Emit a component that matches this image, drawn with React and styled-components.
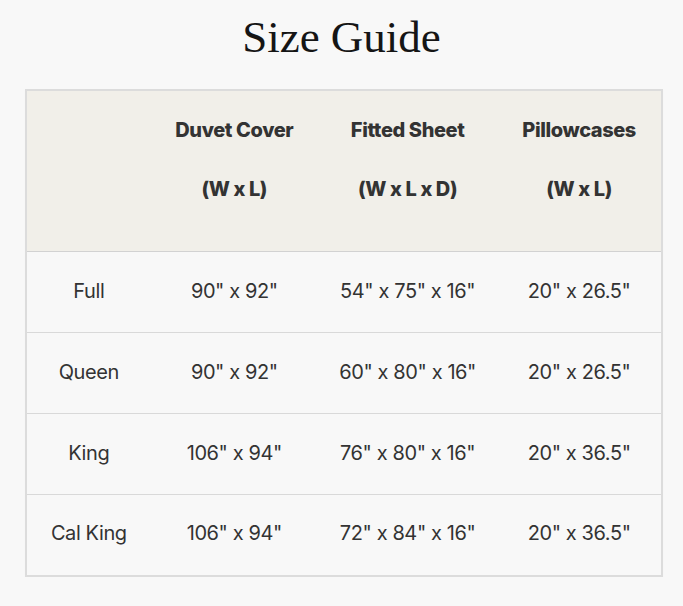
import React from "react";
import styled, { createGlobalStyle } from "styled-components";

const GlobalStyle = createGlobalStyle`
  body {
    margin: 0;
    background: #f8f8f8;
    font-family: "Inter", "Liberation Sans", sans-serif;
    color: #333;
  }
`;

const Page = styled.div`
  width: 683px;
  padding: 12px 0 0;
  box-sizing: border-box;
`;

const Title = styled.h1`
  margin: 0 0 27px;
  text-align: center;
  font-family: "Liberation Serif", "DejaVu Serif", serif;
  font-weight: 400;
  font-size: 45px;
  line-height: 50px;
  color: #151515;
`;

const Table = styled.table`
  margin: 0 0 0 25px;
  width: 638px;
  border-collapse: collapse;
  border: 2px solid #dcdcdc;
  box-shadow: 0 1px 1px rgba(0, 0, 0, 0.04);

  & th,
  & td {
    text-align: center;
    padding: 0;
  }
`;

const Head = styled.thead`
  background: #f1efe9;
  border-bottom: 1px solid #d2d2d2;
`;

const HeadCell = styled.th`
  height: 138px;
  padding-bottom: 22px !important;
  vertical-align: middle;
  font-size: 20px;
  font-weight: 800;
  color: #333;
  line-height: 59px;
  letter-spacing: -0.4px;
  width: ${(p) => p.$w}px;
`;

const Row = styled.tr`
  height: 81px;
  border-bottom: 1px solid #d9d9d9;

  &:last-child {
    border-bottom: none;
  }
`;

const Cell = styled.td`
  padding-bottom: 3px !important;
  font-size: 20px;
  font-weight: 400;
  color: #333;
  letter-spacing: -0.4px;
`;

const columns = [
  { w: 124, lines: [] },
  { w: 168, lines: ["Duvet Cover", "(W x L)"] },
  { w: 180, lines: ["Fitted Sheet", "(W x L x D)"] },
  { w: 164, lines: ["Pillowcases", "(W x L)"] },
];

const rows = [
  ["Full", '90" x 92"', '54" x 75" x 16"', '20" x 26.5"'],
  ["Queen", '90" x 92"', '60" x 80" x 16"', '20" x 26.5"'],
  ["King", '106" x 94"', '76" x 80" x 16"', '20" x 36.5"'],
  ["Cal King", '106" x 94"', '72" x 84" x 16"', '20" x 36.5"'],
];

export default function App() {
  return (
    <Page>
      <GlobalStyle />
      <Title>Size Guide</Title>
      <Table>
        <Head>
          <tr>
            {columns.map((c, i) => (
              <HeadCell key={i} $w={c.w}>
                {c.lines.map((l, j) => (
                  <div key={j}>{l}</div>
                ))}
              </HeadCell>
            ))}
          </tr>
        </Head>
        <tbody>
          {rows.map((r) => (
            <Row key={r[0]}>
              {r.map((v, i) => (
                <Cell key={i}>{v}</Cell>
              ))}
            </Row>
          ))}
        </tbody>
      </Table>
    </Page>
  );
}
